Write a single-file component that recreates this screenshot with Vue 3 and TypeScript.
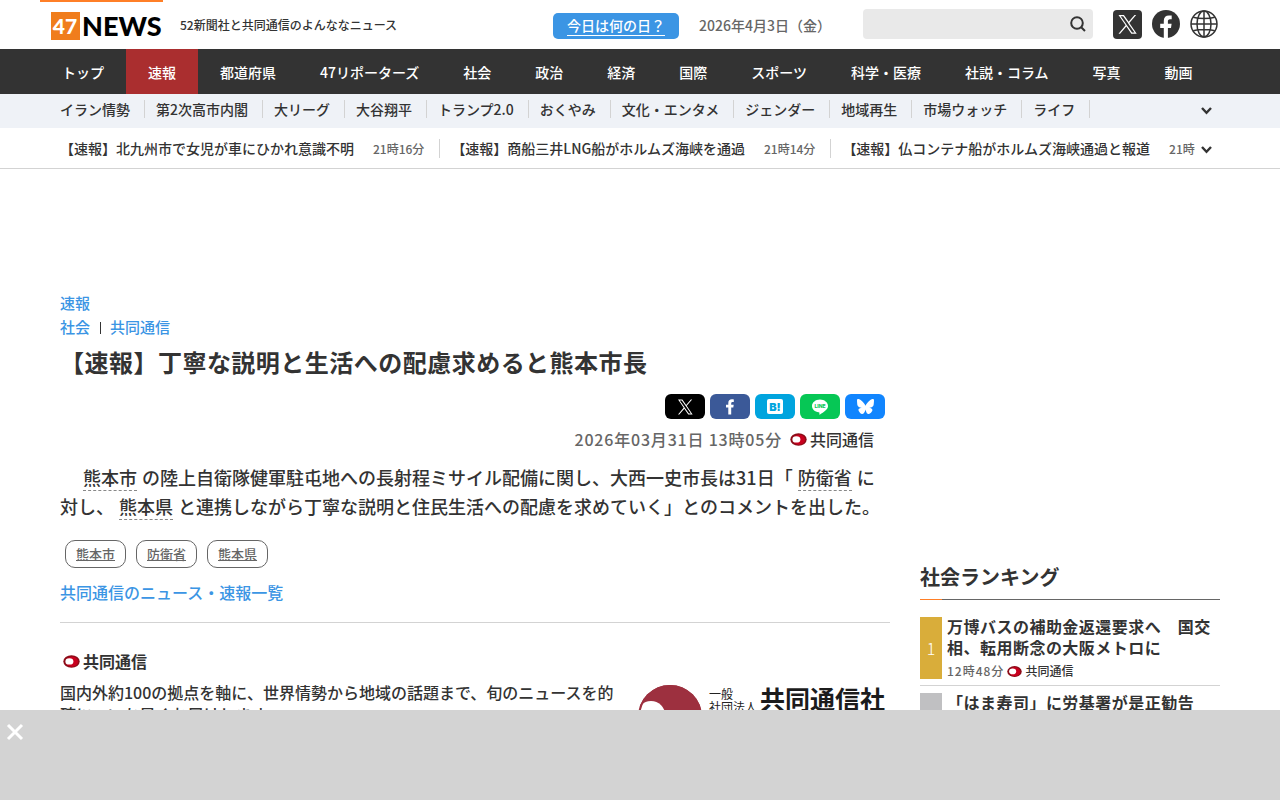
<script setup lang="ts">
import { ref } from 'vue'

interface Headline { title: string; time: string }
interface RankItem { title: string; time: string; tone: string }

const query = ref('')
const bannerOpen = ref(true)

const mainNav: string[] = [
  'トップ', '速報', '都道府県', '47リポーターズ', '社会', '政治', '経済', '国際',
  'スポーツ', '科学・医療', '社説・コラム', '写真', '動画',
]
const activeNav = '速報'

const topics: string[] = [
  'イラン情勢', '第2次高市内閣', '大リーグ', '大谷翔平', 'トランプ2.0', 'おくやみ',
  '文化・エンタメ', 'ジェンダー', '地域再生', '市場ウォッチ', 'ライフ',
]

const headlines: Headline[] = [
  { title: '【速報】北九州市で女児が車にひかれ意識不明', time: '21時16分' },
  { title: '【速報】商船三井LNG船がホルムズ海峡を通過', time: '21時14分' },
  { title: '【速報】仏コンテナ船がホルムズ海峡通過と報道', time: '21時08分' },
]

const tags: string[] = ['熊本市', '防衛省', '熊本県']

const ranking: RankItem[] = [
  { title: '万博バスの補助金返還要求へ　国交相、転用断念の大阪メトロに', time: '12時48分', tone: 'gold' },
  { title: '「はま寿司」に労基署が是正勧告', time: '10時30分', tone: 'silver' },
]

const xPath = 'M714 519L1161 0H1055L667 451L357 0H0L468 682L0 1226H106L515 750L843 1226H1200L714 519ZM569 688L522 620L144 80H307L611 516L659 584L1055 1150H892L569 688Z'
</script>

<template>
  <div class="page">
    <header>
      <div class="wide masthead">
        <a class="logo" href="#" aria-label="47NEWS">
          <svg width="112" height="28" viewBox="0 0 112 28" aria-hidden="true">
            <rect width="29" height="28" fill="#f07d1c" />
            <text class="mark" x="14" y="22" text-anchor="middle">47</text>
            <text class="word" x="31" y="24">NEWS</text>
          </svg>
        </a>
        <p class="tagline">52新聞社と共同通信のよんななニュース</p>
        <a class="today" href="#"><span>今日は何の日？</span></a>
        <time class="date" datetime="2026-04-03">2026年4月3日（金）</time>
        <form class="search" @submit.prevent>
          <input v-model="query" type="text" aria-label="検索" />
          <button type="submit" aria-label="検索する">
            <svg width="16" height="16" viewBox="0 0 16 16" fill="none" stroke="#333" stroke-width="2">
              <circle cx="7" cy="7" r="5.8" />
              <path d="M11.2 11.2L15 15" />
            </svg>
          </button>
        </form>
        <div class="social">
          <a href="#" aria-label="X">
            <svg width="29" height="29" viewBox="0 0 29 29">
              <rect width="29" height="29" rx="4" fill="#333" />
              <path :d="xPath" transform="translate(5.5 5) scale(.0152)" fill="#fff" />
            </svg>
          </a>
          <a href="#" aria-label="Facebook">
            <svg width="28" height="28" viewBox="0 0 28 28">
              <circle cx="14" cy="14" r="14" fill="#333" />
              <path d="M11.8 28V18H8.2V13.8H11.8V10.8C11.8 7.2 13.8 5.4 17 5.4C18.4 5.4 19.7 5.6 19.7 5.6V9.2H18C16.4 9.2 15.9 10.2 15.9 11.2V13.8H19.6L19 18H15.9V28Z" fill="#fff" />
            </svg>
          </a>
          <a href="#" aria-label="Language">
            <svg width="28" height="28" viewBox="0 0 28 28" fill="none" stroke="#333" stroke-width="1.5">
              <circle cx="14" cy="14" r="13" />
              <ellipse cx="14" cy="14" rx="7" ry="13" />
              <path d="M14 1V27M1 14H27M3.2 7.2C9 9 19 9 24.8 7.2M3.2 20.8C9 19 19 19 24.8 20.8" />
            </svg>
          </a>
        </div>
      </div>

      <nav class="main-nav" aria-label="メイン">
        <div class="wide">
          <a v-for="item in mainNav" :key="item" href="#" :class="{ active: item === activeNav }">{{ item }}</a>
        </div>
      </nav>

      <nav class="topics" aria-label="トピックス">
        <div class="content strip">
          <div class="clip">
            <a v-for="topic in topics" :key="topic" href="#">{{ topic }}</a>
          </div>
          <button type="button" aria-label="トピックスを開く">
            <svg width="11" height="8" viewBox="0 0 11 8"><path d="M1 1L5.5 5.8L10 1" fill="none" stroke="#333" stroke-width="2.4" /></svg>
          </button>
        </div>
      </nav>

      <div class="ticker">
        <div class="content strip">
          <div class="clip">
            <a v-for="line in headlines" :key="line.title" href="#">{{ line.title }}<time>{{ line.time }}</time></a>
          </div>
          <button type="button" aria-label="速報を開く">
            <svg width="11" height="8" viewBox="0 0 11 8"><path d="M1 1L5.5 5.8L10 1" fill="none" stroke="#333" stroke-width="2.4" /></svg>
          </button>
        </div>
      </div>
    </header>

    <div class="content columns">
      <main>
        <div class="crumbs"><a href="#">速報</a></div>
        <div class="crumbs"><a href="#">社会</a><i></i><a href="#">共同通信</a></div>
        <h1>【速報】丁寧な説明と生活への配慮求めると熊本市長</h1>

        <div class="share">
          <a class="x" href="#" aria-label="Xでシェア">
            <svg width="16" height="16" viewBox="0 0 16 16"><path :d="xPath" transform="translate(1 .5) scale(.0122)" fill="#fff" /></svg>
          </a>
          <a class="fb" href="#" aria-label="Facebookでシェア">
            <svg width="16" height="16" viewBox="0 0 16 16"><path d="M6.3 15.5V8.6H4V5.8H6.3V3.9C6.3 1.6 7.7.3 9.8.3C10.8.3 11.8.5 11.8.5V2.9H10.6C9.5 2.9 9.2 3.6 9.2 4.3V5.8H11.7L11.3 8.6H9.2V15.5Z" fill="#fff" /></svg>
          </a>
          <a class="hatena" href="#" aria-label="はてなブックマークに追加">
            <svg width="16" height="16" viewBox="0 0 16 16">
              <rect width="16" height="15" rx="2" fill="#fff" />
              <text x="8" y="12" text-anchor="middle">B!</text>
            </svg>
          </a>
          <a class="line" href="#" aria-label="LINEで送る">
            <svg width="16" height="16" viewBox="0 0 16 16">
              <path d="M8 .5C3.6.5 0 3.4 0 6.9C0 10.1 2.8 12.7 6.7 13.2C7.7 13.4 7.5 13.9 7.3 15.3C7.3 15.7 7.6 15.7 8 15.5C8.7 15.1 12.5 12.8 14.2 10.8C15.4 9.5 16 8.3 16 6.9C16 3.4 12.4.5 8 .5Z" fill="#fff" />
              <text x="8" y="9" text-anchor="middle">LINE</text>
            </svg>
          </a>
          <a class="bsky" href="#" aria-label="Blueskyでシェア">
            <svg width="17" height="17" viewBox="0 0 24 24"><path fill="#fff" d="M12 10.8c-1.087-2.114-4.046-6.053-6.798-7.995C2.566.944 1.561 1.266.902 1.565.139 1.908 0 3.08 0 3.768c0 .69.378 5.65.624 6.479.815 2.736 3.713 3.66 6.383 3.364-3.912.58-7.387 2.005-2.83 7.078 5.013 5.19 6.87-1.113 7.823-4.308.953 3.195 2.05 9.271 7.733 4.308 4.267-4.308 1.172-6.498-2.74-7.078 2.67.297 5.568-.628 6.383-3.364.246-.828.624-5.79.624-6.478 0-.69-.139-1.861-.902-2.206-.659-.298-1.664-.62-4.3 1.24C16.046 4.748 13.087 8.687 12 10.8Z" /></svg>
          </a>
        </div>

        <div class="byline">
          <time datetime="2026-03-31T13:05">2026年03月31日 13時05分</time>
          <svg class="kyodo" viewBox="0 0 17 13"><ellipse cx="8.5" cy="6.5" rx="8.2" ry="6.2" fill="#8c0c18" /><ellipse cx="9" cy="6.8" rx="6" ry="5" fill="#c8001e" /><ellipse cx="6.4" cy="6.4" rx="4" ry="3.2" fill="#fff" /></svg>
          <a href="#">共同通信</a>
        </div>

        <p class="body">　 <a href="#">熊本市</a> の陸上自衛隊健軍駐屯地への長射程ミサイル配備に関し、大西一史市長は31日「 <a href="#">防衛省</a> に対し、 <a href="#">熊本県</a> と連携しながら丁寧な説明と住民生活への配慮を求めていく」とのコメントを出した。</p>

        <div class="tags"><a v-for="tag in tags" :key="tag" href="#">{{ tag }}</a></div>
        <a class="more" href="#">共同通信のニュース・速報一覧</a>

        <section class="source">
          <div class="about">
            <h2>
              <svg class="kyodo" viewBox="0 0 17 13"><ellipse cx="8.5" cy="6.5" rx="8.2" ry="6.2" fill="#8c0c18" /><ellipse cx="9" cy="6.8" rx="6" ry="5" fill="#c8001e" /><ellipse cx="6.4" cy="6.4" rx="4" ry="3.2" fill="#fff" /></svg>
              共同通信
            </h2>
            <p>国内外約100の拠点を軸に、世界情勢から地域の話題まで、旬のニュースを的確に、いち早くお届けします。</p>
          </div>
          <svg class="agency" width="252" height="64" viewBox="0 0 252 64" role="img" aria-label="一般社団法人 共同通信社">
            <circle cx="32" cy="32" r="32" fill="#9d303f" />
            <circle cx="13" cy="30" r="14" fill="#fff" />
            <circle cx="32" cy="32" r="31" fill="none" stroke="#9d303f" stroke-width="2" />
            <text class="kyodo-word" x="26" y="32">KYODO</text>
            <text class="small" x="71" y="14">一般</text>
            <text class="small" x="71" y="27">社団法人</text>
            <text class="large" x="122" y="24">共同通信社</text>
          </svg>
        </section>
      </main>

      <aside>
        <h2>社会ランキング</h2>
        <ol>
          <li v-for="(item, index) in ranking" :key="item.title">
            <span class="rank" :class="item.tone">{{ index + 1 }}</span>
            <div class="entry">
              <a class="rank-title" href="#">{{ item.title }}</a>
              <div class="meta">
                <time>{{ item.time }}</time>
                <svg class="kyodo small-mark" viewBox="0 0 17 13"><ellipse cx="8.5" cy="6.5" rx="8.2" ry="6.2" fill="#8c0c18" /><ellipse cx="9" cy="6.8" rx="6" ry="5" fill="#c8001e" /><ellipse cx="6.4" cy="6.4" rx="4" ry="3.2" fill="#fff" /></svg>
                <span>共同通信</span>
              </div>
            </div>
          </li>
        </ol>
      </aside>
    </div>

    <div v-if="bannerOpen" class="banner">
      <button type="button" aria-label="閉じる" @click="bannerOpen = false">
        <svg width="18" height="18" viewBox="0 0 18 18"><path d="M2 2L16 16M16 2L2 16" stroke="#fff" stroke-width="3" /></svg>
      </button>
    </div>
  </div>
</template>

<style>
body {
  margin: 0;
  background: #fff;
}
</style>

<style scoped>
.page {
  color: #333;
  font-family: "Noto Sans CJK JP", sans-serif;
  font-size: 16px;
  font-weight: 500;
}
.page * {
  box-sizing: border-box;
}
a {
  color: inherit;
  text-decoration: none;
}
h1, h2, p, ol {
  margin: 0;
  padding: 0;
}
ol {
  list-style: none;
}
svg {
  display: block;
  flex: none;
}
button {
  padding: 0;
  border: 0;
  background: none;
  cursor: pointer;
}
.wide {
  display: flex;
  max-width: 1200px;
  margin: 0 auto;
}
.content {
  max-width: 1160px;
  margin: 0 auto;
}
.masthead {
  align-items: center;
  height: 49px;
  padding-right: 22px;
}
.logo {
  display: flex;
  align-items: center;
  width: 123px;
  height: 49px;
  padding-left: 11px;
  border-top: 2px solid #ff7f27;
}
.mark {
  fill: #fff;
  font: 900 21px Lato, sans-serif;
}
.word {
  fill: #000;
  font: 900 27px Lato, sans-serif;
}
.tagline {
  margin-left: 17px;
  font-size: 12px;
}
.today {
  height: 26px;
  margin-top: 3px;
  margin-left: auto;
  padding: 0 14px;
  border-radius: 5px;
  background: #3b95e4;
  color: #fff;
  font-size: 14px;
}
.today span {
  display: block;
  height: 23px;
  border-bottom: 1px solid #fff;
  line-height: 24px;
}
.date {
  margin-left: 20px;
  color: #666;
  font-size: 14px;
}
.search {
  display: flex;
  width: 230px;
  height: 30px;
  margin: 0 20px 1px 32px;
  border-radius: 4px;
  background: #e9e9e9;
}
.search input {
  flex: 1;
  min-width: 0;
  padding: 0 8px;
  border: 0;
  background: none;
  font: inherit;
  font-size: 14px;
}
.search button {
  padding: 0 7px;
}
.social {
  display: flex;
  gap: 10px;
}
.main-nav {
  background: #333;
}
.main-nav a {
  padding: 2px 22px 0;
  color: #fff;
  font-size: 14px;
  line-height: 43px;
  white-space: nowrap;
}
.main-nav .active {
  background: #aa2e2f;
}
.topics {
  background: #eff2f7;
}
.strip {
  display: flex;
  align-items: center;
  padding-right: 8px;
}
.topics .strip {
  height: 34px;
}
.ticker .strip {
  height: 40px;
}
.ticker {
  border-bottom: 1px solid #d3d3d3;
}
.ticker button {
  margin-top: 3px;
}
.clip {
  display: flex;
  flex: 1;
  min-width: 0;
  margin-right: 6px;
  overflow: hidden;
}
.topics .clip {
  margin-bottom: 4px;
}
.clip a {
  flex: none;
  margin-right: 11px;
  padding-right: 14px;
  border-right: 1px solid #d3d3d3;
  font-size: 14px;
  line-height: 18px;
}
.ticker .clip a {
  padding-right: 15px;
}
.clip time {
  margin-left: 19px;
  color: #666;
  font-size: 12px;
}
.columns {
  display: flex;
  gap: 30px;
}
main {
  flex: 1;
  min-width: 0;
  padding-top: 122px;
}
.crumbs {
  display: flex;
  align-items: center;
  color: #3b95e4;
  font-size: 15px;
  line-height: 24px;
}
.crumbs i {
  width: 1px;
  height: 12px;
  margin: 1px 9px 0 10px;
  background: #333;
}
h1 {
  margin-top: 6px;
  font-size: 24px;
  letter-spacing: 0.02em;
  line-height: 34px;
}
.share {
  display: flex;
  justify-content: flex-end;
  gap: 5px;
  margin: 15px 5px 0 0;
}
.share a {
  display: flex;
  align-items: center;
  justify-content: center;
  width: 40px;
  height: 25px;
  border-radius: 6px;
}
.x { background: #000; }
.fb { background: #3b5998; }
.hatena { background: #00a4de; }
.line { background: #06c755; }
.bsky { background: #1185fe; }
.hatena text {
  fill: #00a4de;
  font: 900 11px Inter, sans-serif;
}
.line text {
  fill: #06c755;
  font: 800 5px Inter, sans-serif;
}
.byline {
  display: flex;
  align-items: center;
  justify-content: flex-end;
  margin: 8px 16px 0 0;
  line-height: 24px;
}
.byline time {
  color: #666;
  letter-spacing: 0.05em;
}
.kyodo {
  width: 17px;
  height: 13px;
  margin: 0 3px 0 8px;
}
.body {
  margin-top: 12px;
  font-size: 18px;
  line-height: 29px;
}
.body a {
  margin: 0 1px;
  border-bottom: 1px dashed #888;
}
.tags {
  display: flex;
  gap: 10px;
  margin: 19px 5px 0;
}
.tags a {
  padding: 0 10px;
  border: 1px solid #666;
  border-radius: 10px;
  color: #666;
  font-size: 13px;
  line-height: 26px;
  text-decoration: underline;
}
.more {
  display: block;
  margin-top: 12px;
  color: #3b95e4;
  line-height: 24px;
}
.source {
  display: flex;
  justify-content: space-between;
  gap: 16px;
  margin-top: 18px;
  padding-top: 26px;
  border-top: 1px solid #d3d3d3;
}
.source h2 {
  display: flex;
  align-items: center;
  font-size: 16px;
  line-height: 24px;
}
.source h2 .kyodo {
  margin-left: 3px;
}
.source p {
  margin-top: 8px;
  line-height: 22px;
}
.agency {
  margin-top: 36px;
}
.kyodo-word {
  fill: #d9a3a8;
  font: 900 10px Lato, sans-serif;
}
.small {
  fill: #222;
  font-size: 12px;
  font-weight: 400;
}
.large {
  fill: #1c1c1c;
  font-size: 25px;
  font-weight: 700;
}
aside {
  width: 300px;
  padding-top: 393px;
}
aside h2 {
  padding-bottom: 8px;
  background: linear-gradient(to right, #ff7f27 22px, #666 22px) bottom / 100% 1px no-repeat;
  font-size: 20px;
  line-height: 30px;
}
ol {
  padding-top: 10px;
}
li {
  display: flex;
  gap: 5px;
  padding: 7px 0 6px;
  border-bottom: 1px solid #d3d3d3;
}
.rank {
  display: flex;
  flex: none;
  align-items: center;
  justify-content: center;
  width: 22px;
  color: #fff;
  font-weight: 300;
}
.gold { background: #d9ad3a; }
.silver { background: #c0c0c2; }
.entry {
  min-height: 63px;
  margin-top: -1px;
}
.rank-title {
  display: block;
  font-weight: 700;
  letter-spacing: 0.03em;
  line-height: 21px;
}
.meta {
  display: flex;
  align-items: center;
  padding-top: 5px;
  font-size: 12px;
  line-height: 16px;
}
.meta time {
  color: #666;
  letter-spacing: 1px;
}
.meta .small-mark {
  width: 15px;
  margin: 0 3px;
}
.banner {
  position: fixed;
  right: 0;
  bottom: 0;
  left: 0;
  height: 90px;
  background: #d3d3d3;
}
.banner button {
  margin: 13px 6px;
}
</style>
